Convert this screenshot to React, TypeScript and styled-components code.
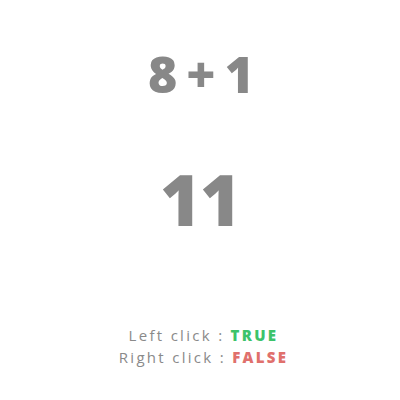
import React from "react";
import styled, { createGlobalStyle } from "styled-components";

const Global = createGlobalStyle`
  html, body { margin: 0; padding: 0; background: #fff; }
  body { font-family: "Open Sans", sans-serif; }
`;

const Page = styled.div`
  width: 400px;
  height: 400px;
  display: flex;
  flex-direction: column;
  align-items: center;
  color: #888;
`;

const Equation = styled.div`
  margin-top: 44px;
  font-size: 50px;
  font-weight: 800;
  line-height: 60px;
  word-spacing: -4px;
  padding-left: 2px;
`;

const Answer = styled.div`
  margin-top: 50px;
  font-size: 70px;
  font-weight: 800;
  line-height: 90px;
  letter-spacing: -1px;
`;

const Status = styled.div`
  margin-top: 80px;
  padding-left: 7px;
  display: flex;
  flex-direction: column;
  align-items: center;
  font-size: 15px;
  line-height: 22px;
  letter-spacing: 2.3px;
  color: #8a8a8a;
`;

const Value = styled.span<{ $ok: boolean }>`
  font-weight: 800;
  color: ${(p) => (p.$ok ? "#3cc36a" : "#e0706c")};
`;

export default function App() {
  return (
    <>
      <Global />
      <Page>
        <Equation>8 + 1</Equation>
        <Answer>11</Answer>
        <Status>
          <div>
            Left click : <Value $ok>TRUE</Value>
          </div>
          <div>
            Right click : <Value $ok={false}>FALSE</Value>
          </div>
        </Status>
      </Page>
    </>
  );
}
